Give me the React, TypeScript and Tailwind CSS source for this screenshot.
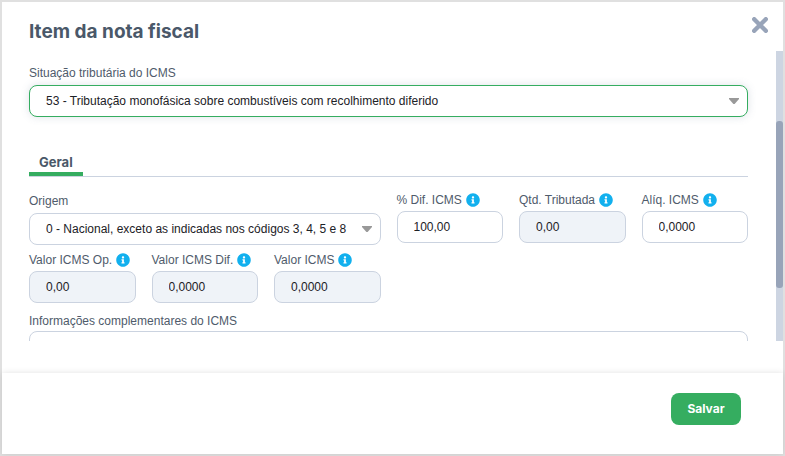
import type { ReactNode } from 'react';
import { FaInfoCircle } from 'react-icons/fa';

type FieldProps = {
  id: string;
  label: string;
  value: string;
  readOnly?: boolean;
};

const labelText = 'flex items-center text-[12px] leading-4 text-[#4f5b6b] whitespace-nowrap';

function Field({ id, label, value, readOnly }: FieldProps) {
  return (
    <div className="min-w-0">
      <label htmlFor={id} className={`${labelText} mb-0.5 h-[18px] gap-1`}>
        {label}
        <FaInfoCircle className="size-3.5 shrink-0 text-[#12b0ee]" />
      </label>
      <input
        id={id}
        type="text"
        defaultValue={value}
        readOnly={readOnly}
        className={`block h-8 w-full rounded-lg border border-[#cbd3e0] px-4 text-[12px] text-[#1c2126] outline-none ${
          readOnly ? 'bg-[#eff3f8]' : 'bg-white'
        }`}
      />
    </div>
  );
}

type SelectFieldProps = {
  id: string;
  label: string;
  active?: boolean;
  className?: string;
  children: ReactNode;
};

function SelectField({ id, label, active, className = '', children }: SelectFieldProps) {
  return (
    <div className={`min-w-0 ${className}`}>
      <label htmlFor={id} className={`${labelText} mb-0.5 h-5`}>
        {label}
      </label>
      <div className="relative">
        <select
          id={id}
          className={`block h-8 w-full appearance-none rounded-lg border bg-white pr-8 pl-4 text-[12px] text-[#1c2126] outline-none ${
            active ? 'border-[#35ad60] shadow-[0_0_8px_rgba(90,110,140,0.2)]' : 'border-[#cbd3e0]'
          }`}
        >
          {children}
        </select>
        <svg
          viewBox="0 0 10 6"
          className="pointer-events-none absolute top-[13px] right-[9px] h-1.5 w-2.5 fill-[#999999]"
          aria-hidden="true"
        >
          <path d="M0 0h10v1L5.6 6H4.4L0 1z" />
        </svg>
      </div>
    </div>
  );
}

export default function App() {
  return (
    <div className="flex h-screen flex-col border-2 border-[#e0e0e0] bg-white font-['Liberation_Sans',sans-serif]">
      <header className="flex h-[49px] shrink-0 items-center justify-between pt-2.5 pr-[15px] pl-[27px]">
        <h1 className="font-['Inter',sans-serif] text-[19px] leading-6 font-bold text-[#4a5869]">
          Item da nota fiscal
        </h1>
        <button type="button" aria-label="Fechar" className="mb-3.5 text-[#98a4b9]">
          <svg viewBox="0 0 16 16" className="size-4" stroke="currentColor" strokeWidth="4.4" strokeLinecap="round">
            <path d="M2.2 2.2l11.6 11.6M13.8 2.2L2.2 13.8" />
          </svg>
        </button>
      </header>

      <div className="mb-8 flex min-h-0 flex-1">
        <main className="min-w-0 flex-1 overflow-y-auto pt-3 pr-7 pl-[27px] [scrollbar-width:none]">
          <SelectField id="situacao" label="Situação tributária do ICMS" active>
            <option>53 - Tributação monofásica sobre combustíveis com recolhimento diferido</option>
          </SelectField>

          <div role="tablist" className="mt-[33px] flex border-b border-[#cbd3e0]">
            <button
              type="button"
              role="tab"
              aria-selected="true"
              className="border-b-4 border-[#35ad60] px-2.5 pt-0.5 font-['Inter',sans-serif] text-[13px] leading-5 font-bold text-[#4a5869]"
            >
              Geral
            </button>
          </div>

          <div className="mt-3.5 grid grid-cols-6 gap-x-4 gap-y-1.5">
            <SelectField id="origem" label="Origem" className="col-span-3">
              <option>0 - Nacional, exceto as indicadas nos códigos 3, 4, 5 e 8</option>
            </SelectField>
            <Field id="dif-icms" label="% Dif. ICMS" value="100,00" />
            <Field id="qtd-tributada" label="Qtd. Tributada" value="0,00" readOnly />
            <Field id="aliq-icms" label="Alíq. ICMS" value="0,0000" />
            <Field id="valor-op" label="Valor ICMS Op." value="0,00" readOnly />
            <Field id="valor-dif" label="Valor ICMS Dif." value="0,0000" readOnly />
            <Field id="valor-icms" label="Valor ICMS" value="0,0000" readOnly />
          </div>

          <div className="mt-2">
            <label htmlFor="info" className={`${labelText} h-5`}>
              Informações complementares do ICMS
            </label>
            <textarea
              id="info"
              rows={6}
              className="block w-full resize-none rounded-lg border border-[#cbd3e0] px-4 py-2 text-[12px] text-[#1c2126] outline-none"
            />
          </div>
        </main>

        {/* scroll track */}
        <div className="w-[7px] shrink-0 bg-[#cdd5e2] pt-[70px]">
          <div className="h-[167px] rounded-[3px] bg-[#98a4b9]" />
        </div>
      </div>

      <footer className="flex shrink-0 justify-end bg-white pt-5 pr-[42px] pb-[29px] shadow-[0_0_6px_rgba(0,0,0,0.12)]">
        <button
          type="button"
          className="h-8 min-w-[70px] rounded-lg bg-[#35ad60] px-4 font-['Inter',sans-serif] text-[12px] font-bold text-white"
        >
          Salvar
        </button>
      </footer>
    </div>
  );
}
